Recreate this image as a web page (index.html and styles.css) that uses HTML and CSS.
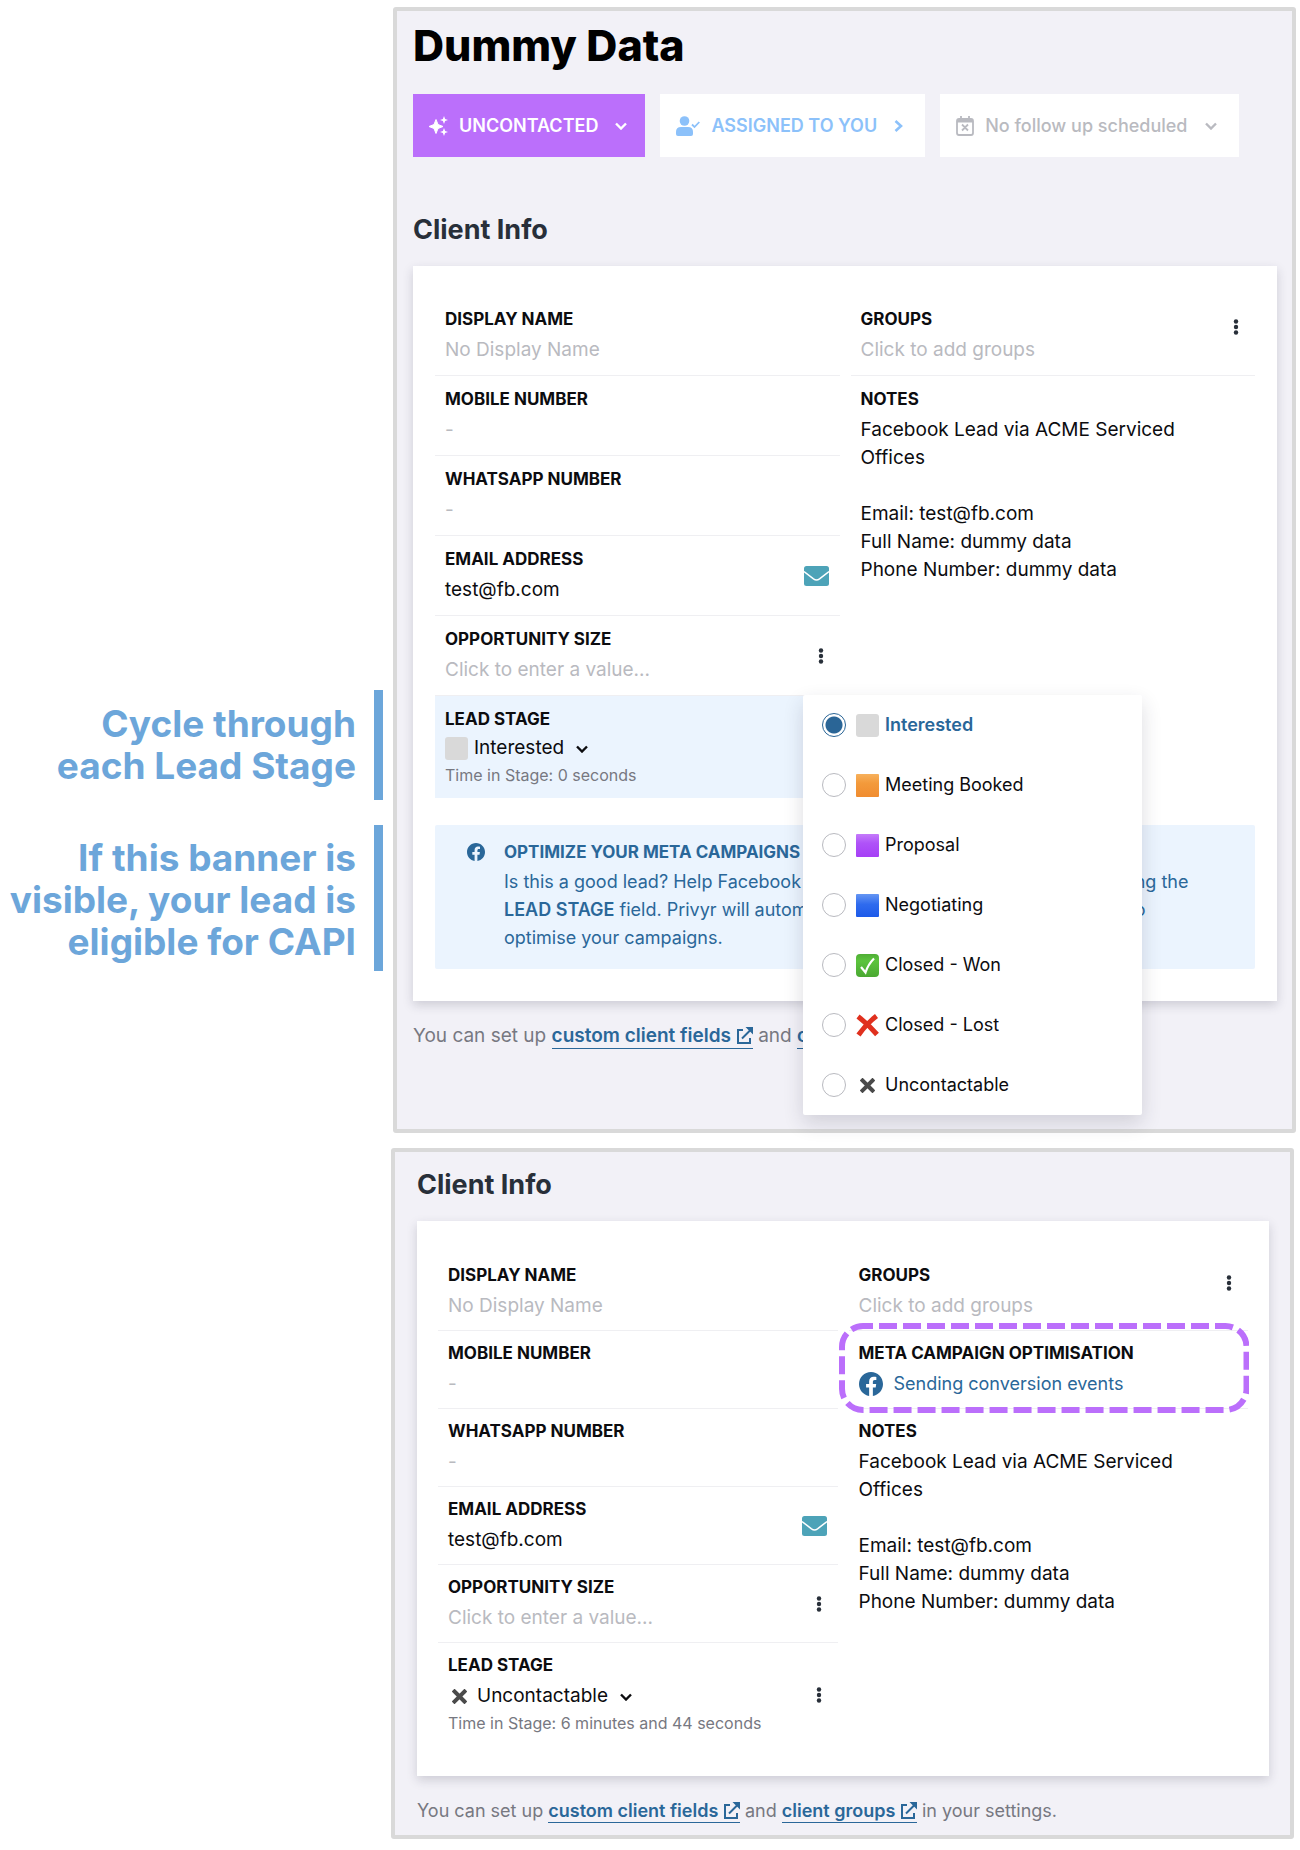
FILE: index.html
```html
<!DOCTYPE html>
<html lang="en">
<head>
  <meta charset="UTF-8">
  <meta name="viewport" content="width=device-width, initial-scale=1">
  <title>Dummy Data - Client Info</title>
  <link rel="stylesheet" href="styles.css">
</head>
<body>
  <svg class="sprite" aria-hidden="true">
    <symbol id="i-down" viewBox="0 0 12 8"><path d="M1 1.500 6 6.500l5-5" fill="none" stroke="currentColor" stroke-width="2.400"/></symbol>
    <symbol id="i-dots" viewBox="0 0 6 16"><g fill="currentColor"><circle cx="3" cy="2.500" r="2.200"/><circle cx="3" cy="8" r="2.200"/><circle cx="3" cy="13.500" r="2.200"/></g></symbol>
    <symbol id="i-mail" viewBox="0 0 25 20"><rect width="25" height="20" rx="2.500" fill="#4da3b8"/><path d="M0 5.500 9.500 12.800q3 2.200 6 0L25 5.500" fill="none" stroke="#fff" stroke-width="1.500"/></symbol>
    <symbol id="i-fb" viewBox="0 0 24 24"><path fill="currentColor" d="M24 12.070C24 5.400 18.630 0 12 0S0 5.400 0 12.070C0 18.100 4.390 23.090 10.130 24v-8.440H7.080v-3.490h3.050V9.410c0-3.020 1.790-4.690 4.530-4.690 1.310 0 2.680.24 2.680.24v2.970h-1.510c-1.490 0-1.960.93-1.960 1.890v2.250h3.330l-.53 3.490h-2.800V24C19.610 23.090 24 18.100 24 12.070z"/></symbol>
    <symbol id="i-ext" viewBox="0 0 17 17"><g fill="none" stroke="currentColor" stroke-width="2"><path d="M7 3H2v13h12v-5"/><path d="M6 11.500 14.500 3"/></g><path d="M9.500 0H17v7.500l-2.700-2.700-2.100-2.100z" fill="currentColor"/></symbol>
    <symbol id="i-x" viewBox="0 0 15 15"><path d="M2.500 2.500l10 10M12.500 2.500l-10 10" stroke="#4a4a4a" stroke-width="4" stroke-linecap="square" fill="none"/></symbol>
  </svg>

  <div class="page">
    <aside class="notes">
      <p class="callout callout-stage">Cycle through<br>each Lead Stage</p>
      <p class="callout callout-banner">If this banner is<br>visible, your lead is<br>eligible for CAPI</p>
    </aside>

    <main class="shots">
      <section class="panel panel-lead">
        <h1>Dummy Data</h1>
        <div class="status-bar">
          <button type="button" class="status status-new">
            <svg width="19" height="20" viewBox="0 0 19 20"><g fill="currentColor"><path d="M7 3.500 9 8.500l5 2-5 2-2 5-2-5-5-2 5-2z" stroke="currentColor"/><path d="M15 0l1.100 2.900L19 4l-2.900 1.100L15 8l-1.100-2.900L11 4l2.900-1.100zM15 12l1.100 2.900L19 16l-2.900 1.100L15 20l-1.100-2.900L11 16l2.900-1.100z"/></g></svg>
            <span>UNCONTACTED</span>
            <svg class="chev" width="12" height="8"><use href="#i-down"/></svg>
          </button>
          <button type="button" class="status status-assigned">
            <svg width="24" height="20" viewBox="0 0 24 20"><circle cx="8.500" cy="5" r="4.800" fill="currentColor"/><path d="M0 18v-2q0-5 5-5h7q5 0 5 5v2q0 2-2 2H2q-2 0-2-2z" fill="currentColor"/><path d="M16 8.500l2.500 2.500L23.300 6" fill="none" stroke="currentColor" stroke-width="1.800"/></svg>
            <span>ASSIGNED TO YOU</span>
            <svg class="chev" width="9" height="12" viewBox="0 0 9 12"><path d="M1.500 1 7 6l-5.500 5" fill="none" stroke="currentColor" stroke-width="2.600"/></svg>
          </button>
          <button type="button" class="status status-follow">
            <svg width="18" height="20" viewBox="0 0 18 20"><path d="M1 5q0-2 2-2h12q2 0 2 2v12q0 2-2 2H3q-2 0-2-2zM5 0v4M13 0v4M6 8.500l6 6M12 8.500l-6 6" fill="none" stroke="currentColor" stroke-width="1.800"/><path d="M1 3h16v3.500H1z" fill="currentColor"/></svg>
            <span>No follow up scheduled</span>
            <svg class="chev" width="12" height="8"><use href="#i-down"/></svg>
          </button>
        </div>

        <h2>Client Info</h2>
        <div class="card">
          <div class="columns">
            <div class="column">
              <div class="field"><h3>DISPLAY NAME</h3><p class="empty">No Display Name</p></div>
              <div class="field"><h3>MOBILE NUMBER</h3><p class="empty">-</p></div>
              <div class="field"><h3>WHATSAPP NUMBER</h3><p class="empty">-</p></div>
              <div class="field"><h3>EMAIL ADDRESS</h3><p>test@fb.com</p>
                <a class="action action-mail" href="mailto:test@fb.com" aria-label="Send email"><svg width="25" height="20"><use href="#i-mail"/></svg></a>
              </div>
              <div class="field"><h3>OPPORTUNITY SIZE</h3><p class="empty">Click to enter a value...</p>
                <button type="button" class="action" aria-label="Opportunity options"><svg width="6" height="16"><use href="#i-dots"/></svg></button>
              </div>
              <div class="field field-stage active">
                <h3>LEAD STAGE</h3>
                <button type="button" class="stage"><span class="swatch grey"></span>Interested<svg class="chev" width="12" height="8"><use href="#i-down"/></svg></button>
                <p class="time">Time in Stage: 0 seconds</p>
                <div class="menu" role="radiogroup" aria-label="Lead stage">
                  <label class="option"><input type="radio" name="stage" checked><span class="swatch grey"></span><span class="option-text">Interested</span></label>
                  <label class="option"><input type="radio" name="stage"><span class="swatch orange"></span><span class="option-text">Meeting Booked</span></label>
                  <label class="option"><input type="radio" name="stage"><span class="swatch purple"></span><span class="option-text">Proposal</span></label>
                  <label class="option"><input type="radio" name="stage"><span class="swatch blue"></span><span class="option-text">Negotiating</span></label>
                  <label class="option"><input type="radio" name="stage"><span class="swatch green"><svg width="23" height="23" viewBox="0 0 23 23"><path d="M5 13l4.500 5.500Q12 10.500 18 4.500" fill="none" stroke="#fff" stroke-width="2.200"/></svg></span><span class="option-text">Closed - Won</span></label>
                  <label class="option"><input type="radio" name="stage"><span class="swatch"><svg width="23" height="23" viewBox="0 0 23 23"><path d="M2 2.500Q12 10 21 20.500M20.500 2Q10 10 2.500 21" fill="none" stroke="#e0301e" stroke-width="5"/></svg></span><span class="option-text">Closed - Lost</span></label>
                  <label class="option"><input type="radio" name="stage"><span class="swatch cross"><svg width="15" height="15"><use href="#i-x"/></svg></span><span class="option-text">Uncontactable</span></label>
                </div>
              </div>
            </div>
            <div class="column">
              <div class="field"><h3>GROUPS</h3><p class="empty">Click to add groups</p>
                <button type="button" class="action action-groups" aria-label="Group options"><svg width="6" height="16"><use href="#i-dots"/></svg></button>
              </div>
              <div class="field field-notes"><h3>NOTES</h3>
                <p>Facebook Lead via ACME Serviced<br>Offices</p>
                <p>Email: test@fb.com<br>Full Name: dummy data<br>Phone Number: dummy data</p>
              </div>
            </div>
          </div>
          <div class="banner">
            <svg class="banner-icon" width="18" height="18"><use href="#i-fb"/></svg>
            <div>
              <h3>OPTIMIZE YOUR META CAMPAIGNS</h3>
              <p>Is this a good lead? Help Facebook find better leads like this one by updating the<br><b>LEAD STAGE</b> field. Privyr will automatically send this update to Facebook to<br>optimise your campaigns.</p>
            </div>
          </div>
        </div>
        <p class="hint">You can set up <a href="#fields">custom client fields <svg width="17" height="17"><use href="#i-ext"/></svg></a> and <a href="#groups">client groups <svg width="17" height="17"><use href="#i-ext"/></svg></a></p>
      </section>

      <section class="panel panel-result">
        <h2>Client Info</h2>
        <div class="card">
          <div class="columns">
            <div class="column">
              <div class="field"><h3>DISPLAY NAME</h3><p class="empty">No Display Name</p></div>
              <div class="field"><h3>MOBILE NUMBER</h3><p class="empty">-</p></div>
              <div class="field"><h3>WHATSAPP NUMBER</h3><p class="empty">-</p></div>
              <div class="field"><h3>EMAIL ADDRESS</h3><p>test@fb.com</p>
                <a class="action action-mail" href="mailto:test@fb.com" aria-label="Send email"><svg width="25" height="20"><use href="#i-mail"/></svg></a>
              </div>
              <div class="field"><h3>OPPORTUNITY SIZE</h3><p class="empty">Click to enter a value...</p>
                <button type="button" class="action" aria-label="Opportunity options"><svg width="6" height="16"><use href="#i-dots"/></svg></button>
              </div>
              <div class="field field-stage">
                <h3>LEAD STAGE</h3>
                <button type="button" class="stage"><span class="swatch cross"><svg width="15" height="15"><use href="#i-x"/></svg></span>Uncontactable<svg class="chev" width="12" height="8"><use href="#i-down"/></svg></button>
                <p class="time">Time in Stage: 6 minutes and 44 seconds</p>
                <button type="button" class="action" aria-label="Stage options"><svg width="6" height="16"><use href="#i-dots"/></svg></button>
              </div>
            </div>
            <div class="column">
              <div class="field"><h3>GROUPS</h3><p class="empty">Click to add groups</p>
                <button type="button" class="action action-groups" aria-label="Group options"><svg width="6" height="16"><use href="#i-dots"/></svg></button>
              </div>
              <div class="field field-meta"><h3>META CAMPAIGN OPTIMISATION</h3>
                <p class="sending"><svg width="24" height="24"><use href="#i-fb"/></svg>Sending conversion events</p>
                <svg class="dashes" aria-hidden="true"><rect x="3" y="3" rx="21"/></svg>
              </div>
              <div class="field field-notes"><h3>NOTES</h3>
                <p>Facebook Lead via ACME Serviced<br>Offices</p>
                <p>Email: test@fb.com<br>Full Name: dummy data<br>Phone Number: dummy data</p>
              </div>
            </div>
          </div>
        </div>
        <p class="hint">You can set up <a href="#fields">custom client fields <svg width="17" height="17"><use href="#i-ext"/></svg></a> and <a href="#groups">client groups <svg width="17" height="17"><use href="#i-ext"/></svg></a> in your settings.</p>
      </section>
    </main>
  </div>
</body>
</html>
```
FILE: styles.css
```css
*{
  box-sizing: border-box;
  padding: 0;
  margin: 0;
}
body{
  background: #fff;
  color: #0c0c0f;
  font-family: Inter, Roboto, sans-serif;
  font-size: 18px;
  line-height: 28px;
}
button{
  border: 0;
  background: none;
  color: inherit;
  font: inherit;
  cursor: pointer;
}
svg{
  display: block;
  flex: none;
}
.sprite{
  position: absolute;
  width: 0;
  height: 0;
}
.page{
  display: grid;
  grid-template-columns: 383px 1fr;
}

/* left side callouts */
.notes{
  display: flex;
  flex-direction: column;
  gap: 25px;
  padding-top: 690px;
}
.callout{
  padding: 13px 18px 13px 0;
  border-right: 9px solid #6ca6da;
  color: #6ca6da;
  font-size: 37px;
  font-weight: 700;
  line-height: 42px;
  text-align: right;
  white-space: nowrap;
}
.callout-banner{
  padding: 12px 18px 8px 0;
}

/* panels */
.shots{
  display: flex;
  flex-direction: column;
  gap: 15px;
  padding: 7px 0 11px;
}
.panel{
  border: 4px solid #d9d9d9;
  border-radius: 3px;
  background: #f2f1f7;
}
.panel-lead{
  margin: 0 4px 0 10px;
  padding: 6px 15px 79px 16px;
}
.panel-result{
  margin: 0 6px 0 8px;
  padding: 17px 21px 10px 22px;
}
h1{
  color: #000;
  font-size: 43px;
  font-weight: 800;
  line-height: 56px;
}
h2{
  margin-bottom: 20px;
  color: #282f39;
  font-size: 27px;
  font-weight: 700;
  line-height: 32px;
}
h3{
  font-size: 17px;
  font-weight: 700;
  line-height: 22px;
}

.status-bar{
  display: flex;
  gap: 15px;
  margin: 21px 0 57px;
}
.status{
  display: flex;
  align-items: center;
  gap: 11px;
  height: 63px;
  padding: 0 22px 0 16px;
  background: #fff;
  font-weight: 600;
  white-space: nowrap;
}
.status .chev{
  margin-left: 6px;
}
.status-new{
  padding-right: 18px;
  background: #bb6ffb;
  color: #fff;
}
.status-assigned{
  color: #8cc1fa;
}
.status-follow{
  color: #b9bac0;
  font-weight: 500;
}

/* client card */
.card{
  padding: 30px 22px 32px;
  background: #fff;
  box-shadow: 0 4px 10px rgba(40, 40, 60, .18);
}
.columns{
  display: grid;
  grid-template-columns: 1fr 1fr;
  gap: 11px;
}
.field{
  position: relative;
  height: 80px;
  padding: 12px 10px 0;
  border-bottom: 1px solid #efeff2;
  font-size: 19px;
}
.field h3{
  margin-bottom: 6px;
}
.empty{
  color: #b9bac0;
}
.action{
  position: absolute;
  top: 0;
  right: 0;
  bottom: 0;
  display: flex;
  align-items: center;
  justify-content: center;
  width: 38px;
  color: #282f39;
}
.action-mail{
  width: 46px;
}
.action-groups{
  bottom: 18px;
}
.field-notes,
.field-stage{
  height: auto;
  border: 0;
}
.field-notes p + p{
  margin-top: 28px;
}
.field-stage{
  padding-bottom: 10px;
}
.field-stage h3{
  margin-bottom: 4px;
}
.active{
  background: #ebf4fe;
}
.stage{
  display: flex;
  align-items: center;
  gap: 6px;
}
.stage .chev{
  margin: 2px 0 0 6px;
}
.time{
  color: #777881;
  font-size: 16px;
  line-height: 26px;
}

.swatch{
  flex: none;
  width: 23px;
  height: 23px;
  border-radius: 1px;
}
.grey{
  border-radius: 3px;
  background: #d9d9d9;
}
.orange{
  background: linear-gradient(#f7b15c, #f39a3b 40%, #f08c30);
}
.purple{
  background: linear-gradient(#c47bfa, #af52f8 40%, #a63ff6);
}
.blue{
  background: linear-gradient(#6596f3, #2f6bee 45%, #1d5ae9);
}
.green{
  border-radius: 4px;
  background: linear-gradient(#4fae35, #5cc43d 30%, #4aa832);
}
.cross{
  display: flex;
  align-items: center;
  justify-content: center;
}

/* lead stage dropdown */
.menu{
  position: absolute;
  z-index: 2;
  top: -1px;
  left: 368px;
  width: 339px;
  border-radius: 2px;
  background: #fff;
  box-shadow: 0 8px 20px rgba(40, 40, 60, .16);
  font-size: 18px;
}
.option{
  display: flex;
  align-items: center;
  gap: 6px;
  height: 60px;
  padding-left: 19px;
}
.option input{
  appearance: none;
  width: 24px;
  height: 24px;
  margin-right: 4px;
  border: 1px solid #b9bac0;
  border-radius: 50%;
  background: #fff;
}
.option input:checked{
  border-color: #2a6596;
  background: radial-gradient(circle, #2a6596 8px, #fff 9px);
}
.option input:checked ~ .option-text{
  color: #2a6799;
  font-weight: 600;
}

.banner{
  display: flex;
  gap: 19px;
  margin-top: 27px;
  padding: 16px 30px 17px 32px;
  border-radius: 2px;
  background: #ebf4fe;
  color: #2a6799;
}
.banner-icon{
  margin-top: 2px;
}
.banner h3{
  margin-bottom: 5px;
}
.banner p{
  white-space: nowrap;
}
b{
  font-weight: 600;
}

.hint{
  margin-top: 21px;
  color: #777881;
}
.panel-lead .hint{
  font-size: 19px;
}
.hint a{
  padding-bottom: 1px;
  border-bottom: 1px solid #2a6799;
  color: #2a6799;
  font-weight: 600;
  text-decoration: none;
}
.hint svg{
  display: inline;
  vertical-align: -2px;
}

/* second panel, slightly tighter rows */
.panel-result .card{
  padding: 32px 21px 30px;
}
.panel-result .field{
  height: 78px;
  padding-top: 11px;
}
.panel-result .field-notes,
.panel-result .field-stage{
  height: auto;
}
.panel-result .field-stage h3{
  margin-bottom: 6px;
}
.sending{
  display: flex;
  align-items: center;
  gap: 11px;
  color: #2a6799;
  font-size: 18px;
}
.dashes{
  position: absolute;
  top: -8px;
  left: -10px;
  width: calc(100% + 11px);
  height: 90px;
}
.dashes rect{
  width: calc(100% - 6px);
  height: calc(100% - 6px);
  fill: none;
  stroke: #bb6ffb;
  stroke-width: 6px;
  stroke-dasharray: 18 6;
  stroke-dashoffset: 8;
}
```
